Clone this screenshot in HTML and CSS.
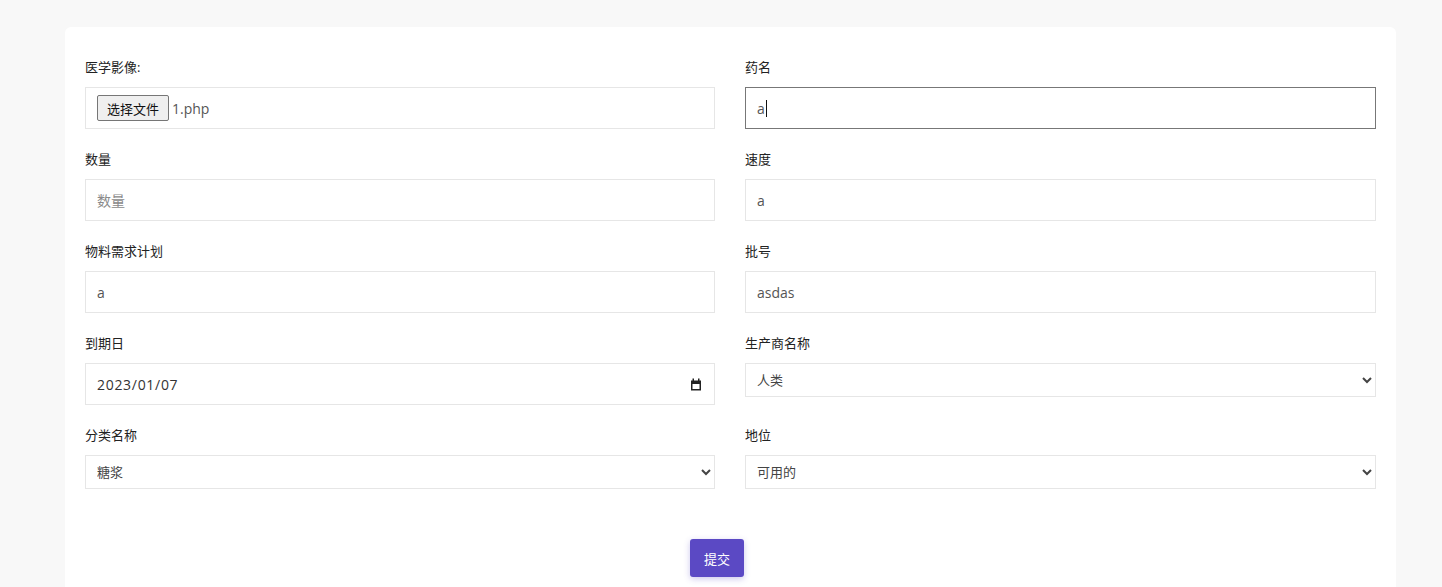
FILE: index.html
```html
<!DOCTYPE html>
<html lang="zh">
<head>
<meta charset="utf-8">
<title>表单</title>
<link rel="stylesheet" href="styles.css">
</head>
<body>
<div class="page">
  <form class="card">
    <div class="grid">
      <div class="field">
        <label class="label">医学影像:</label>
        <div class="control file-control">
          <button type="button" class="file-btn">选择文件</button>
          <span class="file-name">1.php</span>
        </div>
      </div>
      <div class="field">
        <label class="label">药名</label>
        <div class="control focused"><span class="val">a</span><span class="caret"></span></div>
      </div>
      <div class="field">
        <label class="label">数量</label>
        <input class="control" type="text" placeholder="数量">
      </div>
      <div class="field">
        <label class="label">速度</label>
        <input class="control" type="text" value="a">
      </div>
      <div class="field">
        <label class="label">物料需求计划</label>
        <input class="control" type="text" value="a">
      </div>
      <div class="field">
        <label class="label">批号</label>
        <input class="control" type="text" value="asdas">
      </div>
      <div class="field">
        <label class="label">到期日</label>
        <div class="control date-control">
          <span class="date-val">2023/01/07</span>
          <svg class="cal" width="12" height="13" viewBox="0 0 12 13"><path d="M1 2.5h10v10H1z M1 2.5h10v3H1z" fill="#222"/><rect x="2.5" y="6" width="7" height="5" fill="#fff"/><rect x="2.5" y="0.5" width="1.5" height="2.5" fill="#222"/><rect x="8" y="0.5" width="1.5" height="2.5" fill="#222"/></svg>
        </div>
      </div>
      <div class="field">
        <label class="label">生产商名称</label>
        <select class="control select"><option>人类</option></select>
      </div>
      <div class="field">
        <label class="label">分类名称</label>
        <select class="control select"><option>糖浆</option></select>
      </div>
      <div class="field">
        <label class="label">地位</label>
        <select class="control select"><option>可用的</option></select>
      </div>
    </div>
    <div class="actions">
      <button type="button" class="submit">提交</button>
    </div>
  </form>
</div>
</body>
</html>
```

FILE: styles.css
```css
* { box-sizing: border-box; }
html, body { margin: 0; padding: 0; }
body {
  background: #f8f8f8;
  font-family: "Open Sans", "Noto Sans CJK SC", sans-serif;
  color: #222;
  height: 587px;
  overflow: hidden;
}
.page {
  padding: 27px 46px 0 65px;
}
.card {
  background: #fff;
  border-radius: 6px;
  padding: 30px 20px 40px 20px;
  min-height: 600px;
}
.grid {
  display: grid;
  grid-template-columns: 630px 631px;
  column-gap: 30px;
  row-gap: 20px;
}
.field {
  display: flex;
  flex-direction: column;
}
.label {
  font-size: 13px;
  line-height: 20px;
  height: 20px;
  margin-bottom: 10px;
  color: #222;
}
.control {
  height: 42px;
  width: 100%;
  border: 1px solid #e6e6e6;
  border-radius: 0;
  background: #fff;
  padding: 0 11px;
  font-family: "Open Sans", "Noto Sans CJK SC", sans-serif;
  font-size: 14px;
  color: #555;
  outline: none;
  display: flex;
  align-items: center;
}
input.control { display: block; }
.control::placeholder { color: #8a8a8a; }
.file-control { gap: 3px; }
.file-btn {
  height: 26px;
  width: 72px;
  padding: 0;
  font-family: "Noto Sans CJK SC", sans-serif;
  font-size: 13px;
  color: #111;
  background: #efefef;
  border: 1px solid #767676;
  border-radius: 2px;
}
.file-name { font-size: 14px; color: #555; }
.focused { border-color: #777; }
.caret {
  display: inline-block;
  width: 1px;
  height: 17px;
  background: #111;
  margin-left: 1px;
}
.date-control { justify-content: space-between; padding-right: 12px; color: #333; }
.date-val { font-size: 14px; letter-spacing: 0.7px; }
.cal { display: block; }
.select {
  height: 34px;
  font-size: 13px;
  color: #444;
  padding: 0 6px 0 7px;
}
.actions {
  display: flex;
  justify-content: center;
  margin-top: 50px;
  padding-right: 27px;
}
.submit {
  height: 38px;
  width: 54px;
  border: none;
  border-radius: 3px;
  background: #5b49c4;
  color: #fff;
  font-family: "Noto Sans CJK SC", sans-serif;
  font-size: 13px;
  box-shadow: 0 2px 6px rgba(91, 73, 196, 0.3);
}
```
